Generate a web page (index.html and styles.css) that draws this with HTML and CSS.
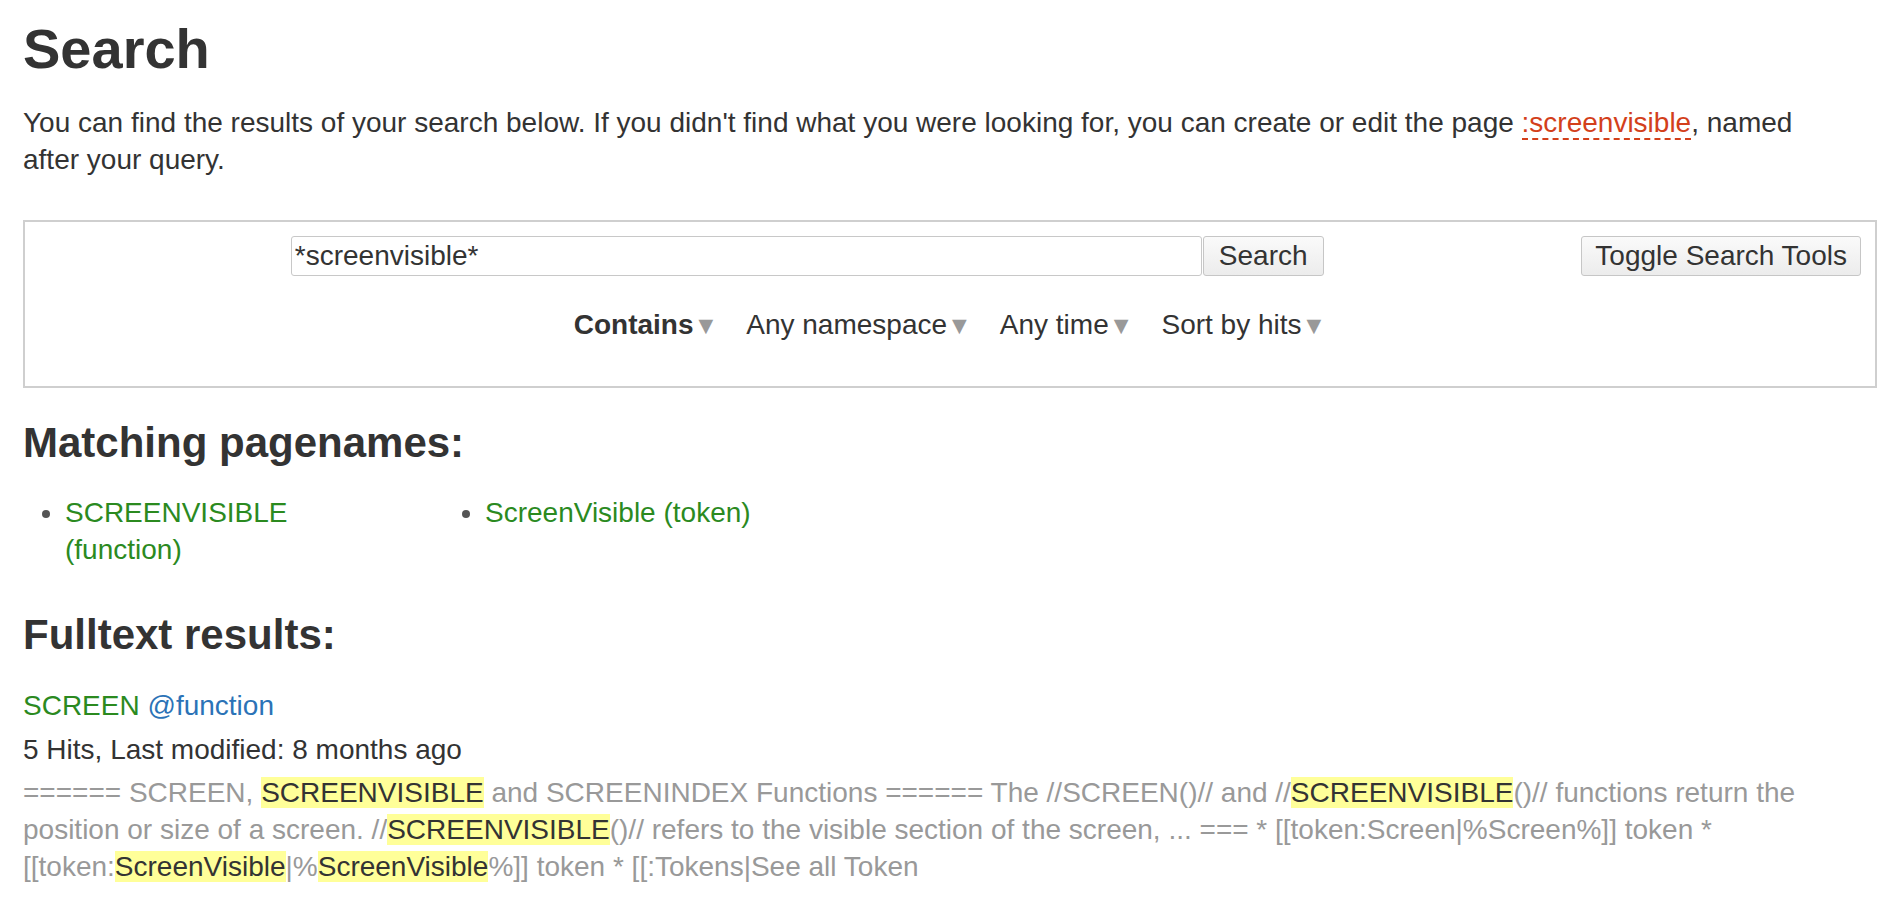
FILE: index.html
```html
<!DOCTYPE html>
<html lang="en">
<head>
  <meta charset="UTF-8">
  <meta name="viewport" content="width=device-width, initial-scale=1.0">
  <title>Search</title>
  <link rel="stylesheet" href="styles.css">
</head>
<body>
  <div class="page">
    <h1>Search</h1>
    <p class="intro">You can find the results of your search below. If you didn't find what you were looking for, you can create or edit the page <a href="#" class="wikilink2">:screenvisible</a>, named after your query.</p>

    <form class="search-form" onsubmit="return false">
      <div class="search-row">
        <div class="query">
          <input type="text" class="query-input" value="*screenvisible*">
          <button type="submit" class="btn">Search</button>
        </div>
        <button type="button" class="btn toggle">Toggle Search Tools</button>
      </div>
      <ul class="search-tools">
        <li class="active">Contains<span class="caret">▼</span></li>
        <li>Any namespace<span class="caret">▼</span></li>
        <li>Any time<span class="caret">▼</span></li>
        <li>Sort by hits<span class="caret">▼</span></li>
      </ul>
    </form>

    <h2 class="pagenames-title">Matching pagenames:</h2>
    <ul class="quickhits">
      <li><a href="#" class="wikilink1">SCREENVISIBLE (function)</a></li>
      <li><a href="#" class="wikilink1">ScreenVisible (token)</a></li>
    </ul>

    <h2 class="fulltext-title">Fulltext results:</h2>
    <dl class="fulltext">
      <dt><a href="#" class="wikilink1">SCREEN</a> <a href="#" class="ns">@function</a></dt>
      <dd class="meta">5 Hits, Last modified: 8 months ago</dd>
      <dd class="snippet">====== SCREEN, <strong class="hl">SCREENVISIBLE</strong> and SCREENINDEX Functions ====== The //SCREEN()// and //<strong class="hl">SCREENVISIBLE</strong>()// functions return the position or size of a screen. //<strong class="hl">SCREENVISIBLE</strong>()// refers to the visible section of the screen, ... === * [[token:Screen|%Screen%]] token * [[token:<strong class="hl">ScreenVisible</strong>|%<strong class="hl">ScreenVisible</strong>%]] token * [[:Tokens|See all Token</dd>
    </dl>
  </div>
</body>
</html>
```

FILE: styles.css
```css
body {
  margin: 0;
  font-family: "Liberation Sans", Arial, Helvetica, sans-serif;
  font-size: 28px;
  line-height: 37px;
  color: #333;
  background: #fff;
}
.page {
  padding: 0 5px 0 23px;
}
a {
  text-decoration: none;
}
h1 {
  font-size: 56px;
  line-height: 66px;
  margin: 16px 0 0;
}
h2 {
  font-size: 42px;
  line-height: 50px;
  margin: 0;
}
.intro {
  margin: 22px 0 0;
  max-width: 1800px;
}
.wikilink2 {
  color: #d33f1b;
  border-bottom: 2px dashed #d33f1b;
}
.wikilink1 {
  color: #2b8a1f;
}
.ns {
  color: #2b73b7;
}

/* search box */
.search-form {
  margin-top: 42px;
  border: 2px solid #cfcfcf;
  padding: 14px 14px 42px;
}
.search-row {
  display: flex;
  align-items: center;
}
.query {
  flex: 1;
  display: flex;
  justify-content: center;
  padding-right: 6px;
}
.query-input {
  width: 911px;
  height: 40px;
  box-sizing: border-box;
  border: 1px solid #c8c8c8;
  border-radius: 3px;
  padding: 0 3px;
  font: 28px "Liberation Sans", Arial, sans-serif;
  color: #333;
  margin: 0;
}
.btn {
  height: 40px;
  box-sizing: border-box;
  padding: 0 15px;
  font: 28px "Liberation Sans", Arial, sans-serif;
  color: #333;
  background: linear-gradient(#fafafa, #ececec);
  border: 1px solid #c6c6c6;
  border-radius: 3px;
  margin: 0;
  cursor: pointer;
}
.query .btn {
  margin-left: 1px;
}
.toggle {
  padding: 0 13px;
}
.search-tools {
  list-style: none;
  margin: 30px 0 0;
  padding: 0;
  display: flex;
  justify-content: center;
  gap: 28px;
}
.search-tools li.active {
  font-weight: bold;
}
.caret {
  color: #999;
  font-size: 25px;
  font-weight: normal;
}

/* matching pagenames */
.pagenames-title {
  margin-top: 30px;
}
.quickhits {
  list-style: disc;
  margin: 26px 0 0;
  padding: 0;
  display: flex;
  align-items: flex-start;
}
.quickhits li {
  width: 336px;
  margin: 0 42px;
  color: #555;
}
.quickhits li::marker {
  font-size: 26px;
}

/* fulltext results */
.fulltext-title {
  margin-top: 42px;
}
.fulltext {
  margin: 27px 0 0;
}
.fulltext dt {
  margin: 0;
}
.fulltext dd {
  margin: 0;
}
.meta {
  margin-top: 7px !important;
}
.snippet {
  margin-top: 6px !important;
  color: #999;
}
.hl {
  font-weight: normal;
  color: #333;
  background: #ffff99;
}
```
